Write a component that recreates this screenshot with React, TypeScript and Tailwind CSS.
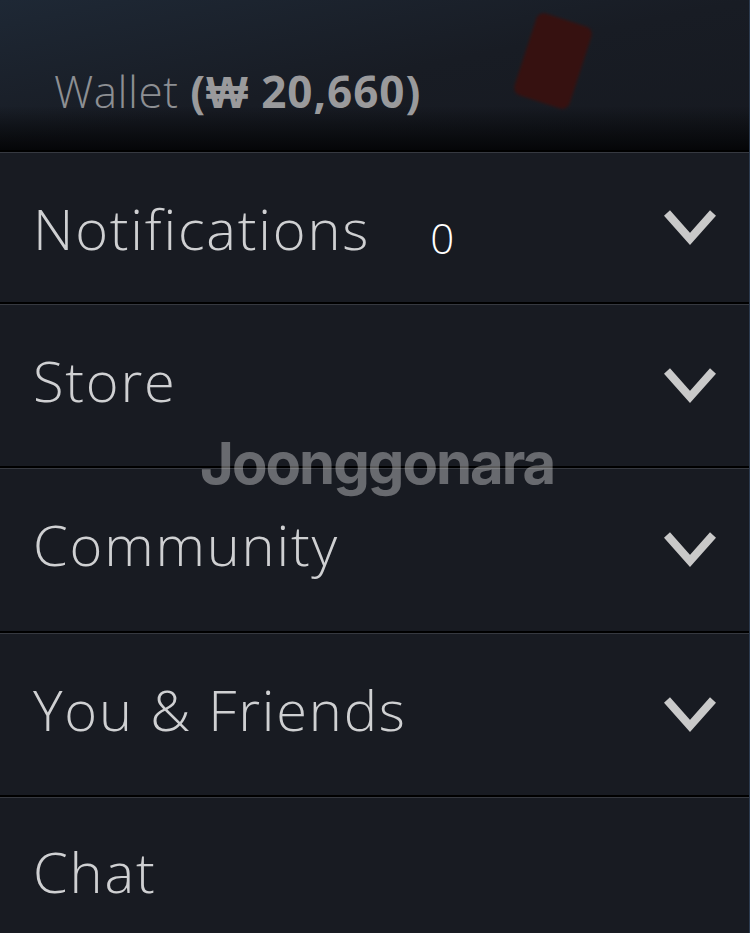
import React from "react";

const rows = [
  { label: "Notifications", count: "0", chevron: true, h: "h-[152px]" },
  { label: "Store", chevron: true, h: "h-[164px]" },
  { label: "Community", chevron: true, h: "h-[165px]" },
  { label: "You & Friends", chevron: true, h: "h-[164px]" },
  { label: "Chat", chevron: false, h: "h-[160px]" },
];

function Chevron() {
  return (
    <svg width="54" height="40" viewBox="0 0 54 40" fill="none">
      <polyline
        points="3,5 26,31 49,5"
        stroke="#c9c9c9"
        strokeWidth="8"
        strokeLinecap="butt"
        strokeLinejoin="miter"
      />
    </svg>
  );
}

export default function App() {
  return (
    <div
      className="relative w-[750px] h-[933px] overflow-hidden bg-[#181b22] border-r border-[#2c3b4f]"
      style={{ fontFamily: "'Open Sans', 'Liberation Sans', sans-serif" }}
    >
      {/* Wallet header */}
      <div className="relative h-[150px] overflow-hidden bg-gradient-to-br from-[#1e2835] via-[#181c24] to-[#161920]">
        <div className="absolute inset-x-0 bottom-0 h-[44px] bg-gradient-to-b from-transparent to-[#050608]" />
        <div className="absolute left-[524px] top-[18px] w-[58px] h-[86px] rotate-[18deg] rounded-[8px] bg-[#361110] blur-[1.5px]" />
        <div className="relative pl-[54px] pt-[69px] text-[44px] leading-none text-[#8d8f93]">
          <span className="font-light tracking-[0.5px]">Wallet </span>
          <span className="font-bold text-[#9a9a9c] tracking-[1px]">(₩ 20,660)</span>
        </div>
      </div>

      {/* Menu rows */}
      {rows.map((row) => (
        <div key={row.label} className={`${row.h} border-t-2 border-black`}>
          <div className="h-full border-t border-[#363940] flex items-center justify-between pl-[33px] pr-[31px]">
            <div className={`flex items-center ${row.count ? "" : "pb-[12px]"}`}>
              <span className="text-[56px] font-light text-[#cfd0d2] tracking-[1.8px] leading-none">
                {row.label}
              </span>
              {row.count && (
                <span className="ml-[60px] pt-[20px] text-[42px] font-light text-white leading-none">
                  {row.count}
                </span>
              )}
            </div>
            {row.chevron && <Chevron />}
          </div>
        </div>
      ))}

      {/* Watermark */}
      <div
        className="absolute left-[200px] top-[434px] text-[58px] font-bold text-white/35 tracking-[-2px] leading-none pointer-events-none"
        style={{ fontFamily: "Inter, 'Liberation Sans', sans-serif" }}
      >
        Joonggonara
      </div>
    </div>
  );
}
